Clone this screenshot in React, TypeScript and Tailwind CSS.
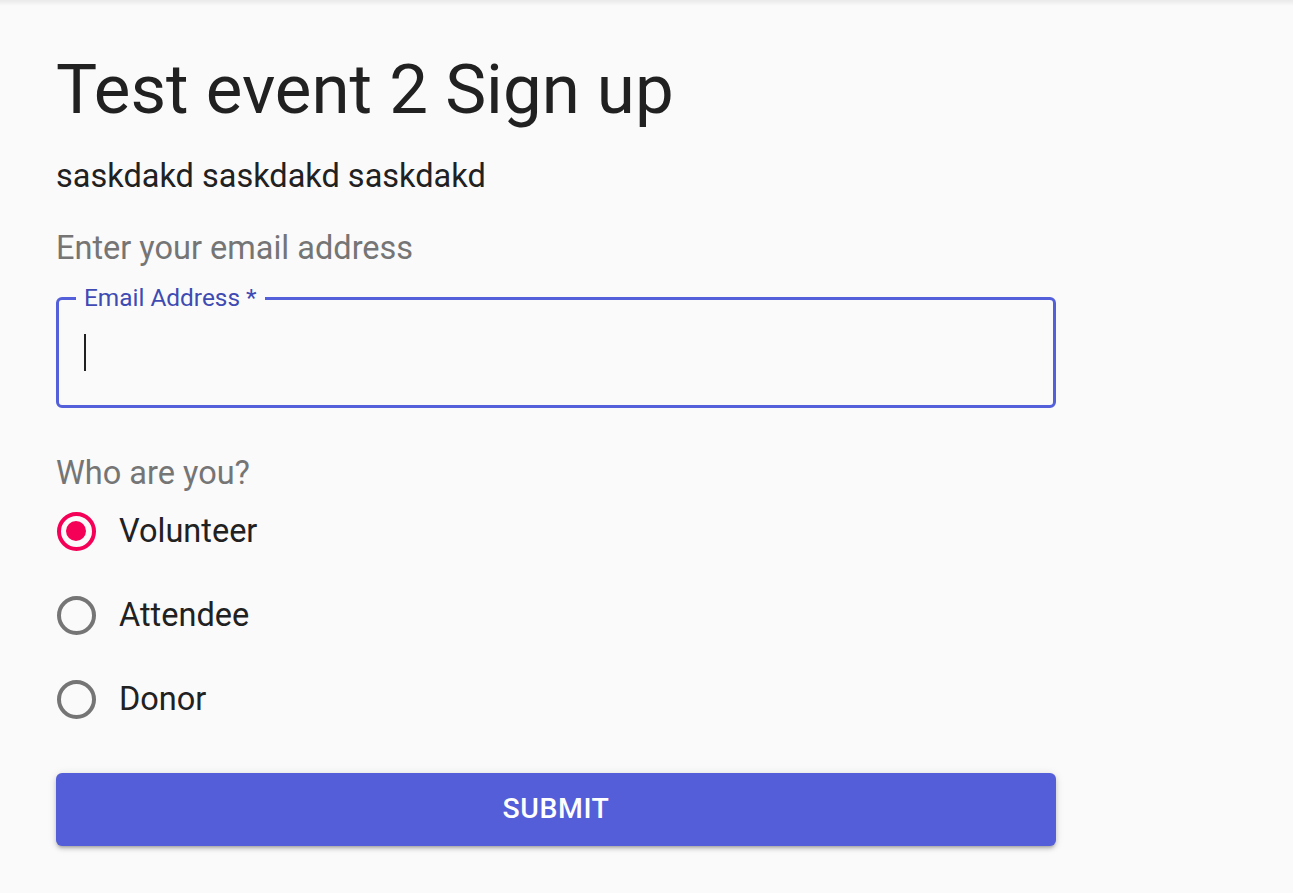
import React from "react";

const font = { fontFamily: "Roboto, 'Noto Sans', Arial, sans-serif" };

function Radio({ checked, label }: { checked?: boolean; label: string }) {
  return (
    <label className="flex h-[84px] items-center">
      <span className="flex h-[40px] w-[40px] items-center justify-center">
        {checked ? (
          <span className="flex h-[39px] w-[39px] items-center justify-center rounded-full border-[4px] border-[#f50057]">
            <span className="h-[20px] w-[20px] rounded-full bg-[#f50057]" />
          </span>
        ) : (
          <span className="h-[39px] w-[39px] rounded-full border-[4px] border-[#757575]" />
        )}
      </span>
      <span className="ml-[23px] text-[32.5px] leading-[40px] text-[#212121]">{label}</span>
    </label>
  );
}

export default function App() {
  return (
    <div style={font} className="min-h-[893px] bg-[#fafafa]">
      <div className="h-[6px] bg-gradient-to-b from-[#e9e9e9] to-[#fafafa]" />
      <div className="pl-[56px] w-[1056px]">
        <h1 className="mt-[44px] text-[69px] leading-[80px] text-[#212121] font-normal">
          Test event 2 Sign up
        </h1>
        <p className="mt-[26px] text-[32.5px] leading-[40px] text-[#212121]">saskdakd saskdakd saskdakd</p>
        <p className="mt-[32px] text-[32.5px] leading-[40px] text-[#757575]">Enter your email address</p>
        <div className="relative mt-[29px] h-[111px] rounded-[6px] border-[3px] border-[#5360d9] pl-[25px] pt-[34px]">
          <span className="absolute left-[17px] top-[-14px] bg-[#fafafa] px-[8px] text-[24.4px] leading-[24px] text-[#3f4bb3]">
            Email Address *
          </span>
          <div className="h-[37px] w-[2px] bg-[#212121]" />
        </div>
        <p className="mt-[45px] text-[32.5px] leading-[40px] text-[#757575]">Who are you?</p>
        <div className="mt-[-4px] flex flex-col">
          <Radio checked label="Volunteer" />
          <Radio label="Attendee" />
          <Radio label="Donor" />
        </div>
        <button className="mt-[32px] flex h-[73px] w-full items-center justify-center rounded-[6px] bg-[#535ed8] text-[28.4px] font-medium tracking-[0.6px] text-white shadow-[0_3px_3px_-2px_rgba(0,0,0,0.2),0_3px_4px_0_rgba(0,0,0,0.14),0_1px_8px_0_rgba(0,0,0,0.12)]">
          SUBMIT
        </button>
      </div>
    </div>
  );
}
